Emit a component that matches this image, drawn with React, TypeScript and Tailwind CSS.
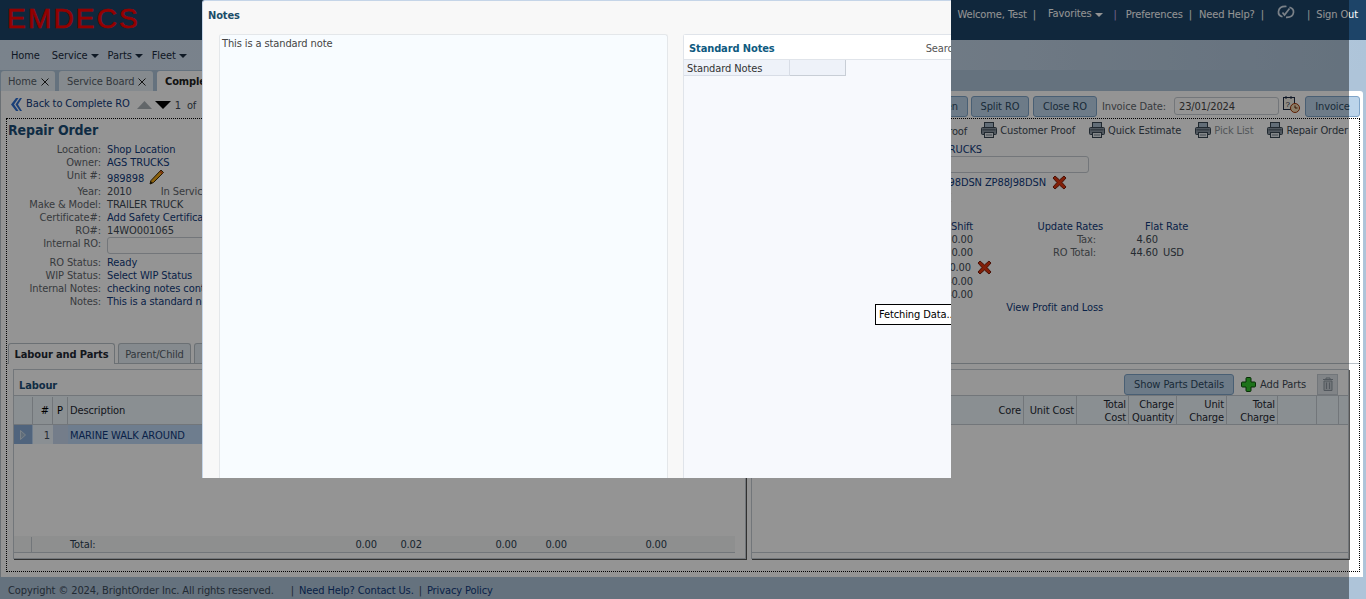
import React from "react";

const Caret = () => (
  <svg width="8" height="4" viewBox="0 0 8 4" className="ml-[3px] mt-[2px]"><path d="M0 0h8L4 4z" fill="currentColor" /></svg>
);

const Printer = () => (
  <svg width="16" height="16" viewBox="0 0 16 16" className="mr-[3px]">
    <rect x="3.500" y="0.500" width="9" height="5" fill="#a9bccd" stroke="#3a4854" />
    <rect x="0.500" y="5.500" width="15" height="7" rx="1" fill="#8b97a2" stroke="#3a4854" />
    <rect x="1.500" y="7" width="13" height="1.500" fill="#5c6975" />
    <rect x="3.500" y="10.500" width="9" height="5" fill="#e4e8ec" stroke="#3a4854" />
    <path d="M5 13h6" stroke="#77838d" />
  </svg>
);

const RedX = () => (
  <svg width="15" height="15" viewBox="0 0 15 15">
    <path d="M3 1 7.500 5 12 1l2 2-4 4.500 4 4.500-2 2-4.500-4L3 14l-2-2 4-4.500L1 3z" fill="#e0360f" stroke="#7a1c08" strokeWidth="1" />
  </svg>
);

const Pencil = () => (
  <svg width="15" height="16" viewBox="0 0 15 16">
    <path d="M12 1l2.500 2.500L4.500 13.500 1 15l1-3.500z" fill="#f0a818" stroke="#3d2a08" strokeWidth="1" />
    <path d="M1.500 12l2 2L1 15z" fill="#2a2208" />
    <path d="M11 2l2.500 2.500" stroke="#d04a20" strokeWidth="1.500" />
  </svg>
);

const Plus = () => (
  <svg width="15" height="15" viewBox="0 0 15 15">
    <path d="M6 .5h3a1 1 0 0 1 1 1V5h3.500a1 1 0 0 1 1 1v3a1 1 0 0 1-1 1H10v3.500a1 1 0 0 1-1 1H6a1 1 0 0 1-1-1V10H1.500a1 1 0 0 1-1-1V6a1 1 0 0 1 1-1H5V1.500a1 1 0 0 1 1-1z" fill="#35c42e" stroke="#0e4f0c" />
  </svg>
);

const Chevrons = () => (
  <svg width="12" height="15" viewBox="0 0 12 15">
    <path d="M6 1 1 7.500 6 14h2.500L4 7.500 8.500 1z" fill="#2f6fd0" />
    <path d="M10 1 5.500 7.500 10 14h2L8 7.500 12 1z" fill="#2f6fd0" />
  </svg>
);

const CalClock = () => (
  <svg width="17" height="17" viewBox="0 0 17 17">
    <rect x="0.500" y="1.500" width="11" height="12" fill="#f4f2e8" stroke="#1c2a44" />
    <path d="M3 0v3M8 0v3" stroke="#1c2a44" />
    <text x="2.500" y="11" fontSize="8" fontFamily="Liberation Sans" fill="#1c2a44">?</text>
    <circle cx="12" cy="12" r="4.500" fill="#f0d8b0" stroke="#a03408" />
    <path d="M12 9.500V12h2.500" stroke="#5a1c04" fill="none" />
  </svg>
);

const Trash = () => (
  <svg width="12" height="14" viewBox="0 0 12 14">
    <path d="M1 2.500h10M4 2.500V1h4v1.500" stroke="#8d97a0" fill="none" />
    <path d="M2 4h8v9.500H2z" fill="#c4ccd2" stroke="#8d97a0" />
    <path d="M4.500 5.500v6.500M7.500 5.500v6.500" stroke="#8d97a0" />
  </svg>
);

const Sync = () => (
  <svg width="18" height="14" viewBox="0 0 18 14" fill="none" stroke="#d3deea" strokeWidth="1.700">
    <path d="M5.500 11.800C2.800 11 1.200 9 1.500 6.500 1.900 3.200 5 1.200 9.500 1.500" />
    <path d="M12.500 2.200C15.200 3 16.800 5 16.500 7.500 16.100 10.800 13 12.500 9 12.300" />
    <path d="M5.500 7.500 7.500 10 12.500 3.500" />
  </svg>
);

const Close = () => (
  <svg width="8" height="8" viewBox="0 0 8 8" className="ml-[4px] mt-[2px]"><path d="M.5.5l7 7M7.500.5l-7 7" stroke="#222" /></svg>
);

const Row = ({ label, children, h = 13 }: { label: string; children: React.ReactNode; h?: number }) => (
  <div className="flex items-start" style={{ height: h }}>
    <div className="w-[93px] shrink-0 text-right text-[#5f666c]">{label}:</div>
    <div className="ml-[6px] flex items-center whitespace-nowrap text-[#103a7c]">{children}</div>
  </div>
);

const PrintItem = ({ label, dim }: { label: string; dim?: boolean }) => (
  <div className="flex items-center">
    <Printer />
    <span className={dim ? "text-[#8d9499]" : "text-[#3e4a55]"}>{label}</span>
  </div>
);

const Btn = ({ children, className = "" }: { children: React.ReactNode; className?: string }) => (
  <div className={"flex items-center rounded-[3px] border border-[#7fa4c8] bg-[#bcd4ea] text-[#2d4a63] " + className}>{children}</div>
);

const Th = ({ w, children, border = true }: { w: number; children?: React.ReactNode; border?: boolean }) => (
  <div style={{ width: w }} className={"flex shrink-0 items-center justify-end px-[2px] pt-[1px] text-right leading-[13px] text-[#1f2933] " + (border ? "border-r border-[#c4ccd2]" : "")}>
    <div>{children}</div>
  </div>
);

export default function App() {
  return (
    <div className="relative flex h-[599px] w-[1366px] flex-col overflow-hidden bg-[#aec4d9] font-['DejaVu_Sans',Verdana,sans-serif] text-[11px] leading-[13px] tracking-[-0.11px] [font-stretch:condensed]">
      {/* header */}
      <header className="flex h-[40px] shrink-0 justify-between bg-[#1d4468] text-white">
        <div className="ml-[7px] mt-[5px] whitespace-nowrap font-['Liberation_Sans',Arial,sans-serif] text-[28px] font-normal leading-[28px] tracking-[2.2px] text-[#ff0000] [-webkit-text-stroke:0.6px_#ff0000] [font-stretch:normal]">EMDECS</div>
        <div className="mr-[8px] flex pt-[8px] leading-[13px]">
          <span className="whitespace-nowrap">Welcome, Test</span>
          <span className="ml-[6px]">|</span>
          <span className="ml-[12px] -mt-[1px] flex items-center self-start">Favorites<Caret /></span>
          <span className="ml-[11px] text-[#c9a8e8]">|</span>
          <span className="ml-[9px]">Preferences</span>
          <span className="ml-[6px]">|</span>
          <span className="ml-[7px] whitespace-nowrap">Need Help?</span>
          <span className="ml-[6px]">|</span>
          <span className="ml-[13px] -mt-[3px]"><Sync /></span>
          <span className="ml-[12px]">|</span>
          <span className="ml-[6px] whitespace-nowrap">Sign Out</span>
        </div>
      </header>

      {/* nav */}
      <nav className="flex h-[30px] shrink-0 items-center bg-gradient-to-r from-[#d3e2f2] via-[#cddced] to-[#aec4d9] pl-[11px] text-[#1a2b40]">
        <span>Home</span>
        <span className="ml-[12px] flex items-center">Service<Caret /></span>
        <span className="ml-[9px] flex items-center">Parts<Caret /></span>
        <span className="ml-[9px] flex items-center">Fleet<Caret /></span>
      </nav>

      {/* page tabs */}
      <div className="flex h-[21px] shrink-0 items-end gap-[4px] whitespace-nowrap pl-[1px]">
        <div className="flex h-[20px] w-[54px] items-center rounded-t-[3px] bg-[#e6eef4] pl-[7px] text-[#56616a]">Home<Close /></div>
        <div className="flex h-[20px] w-[94px] items-center rounded-t-[3px] bg-[#e6eef4] pl-[8px] text-[#56616a]">Service Board<Close /></div>
        <div className="flex h-[20px] w-[120px] items-center rounded-t-[3px] bg-white pl-[8px] font-bold text-[#222]">Complete RO</div>
      </div>

      {/* main panel */}
      <main className="mr-[3px] flex h-[486px] shrink-0 flex-col rounded-tr-[3px] border-l border-[#b9c2c9] bg-white">
        <div className="flex h-[27px] shrink-0 items-center justify-between pr-[3px]">
          <div className="ml-[9px] flex items-center">
            <Chevrons />
            <span className="mb-[2px] ml-[4px] text-[#103a7c]">Back to Complete RO</span>
            <svg width="15" height="8" viewBox="0 0 15 8" className="ml-[7px]"><path d="M0 8 7.500 0 15 8z" fill="#aab0b6" /></svg>
            <svg width="16" height="8" viewBox="0 0 16 8" className="ml-[3px]"><path d="M0 0h16L8 8z" fill="#000" /></svg>
            <span className="ml-[4px] mt-[1px] text-[#3e4a55]">1&nbsp; of</span>
          </div>
          <div className="flex items-center pt-[3px]">
            <Btn className="h-[21px] w-[60px] justify-end pr-[9px]">Reopen</Btn>
            <Btn className="ml-[3px] h-[21px] w-[58px] justify-center">Split RO</Btn>
            <Btn className="ml-[4px] h-[21px] w-[64px] justify-center">Close RO</Btn>
            <span className="ml-[5px] text-[#5f666c]">Invoice Date:</span>
            <div className="ml-[8px] flex h-[18px] w-[105px] items-center rounded-[3px] border border-[#c6ccd2] pl-[4px] text-[#444]">23/01/2024</div>
            <span className="ml-[4px] -mt-[3px]"><CalClock /></span>
            <Btn className="ml-[5px] h-[21px] w-[55px] justify-center">Invoice</Btn>
          </div>
        </div>

        <div className="ml-[5px] mr-[3px] flex h-[454px] flex-col border border-dotted border-black">
          <div className="flex h-[224px] shrink-0 justify-between">
            <div className="w-[400px] pl-[1px]">
              <h1 className="mt-[3px] h-[21px] text-[14px] font-bold leading-[17px] text-[#1b4d75]">Repair Order</h1>
              <Row label="Location">Shop Location</Row>
              <Row label="Owner">AGS TRUCKS</Row>
              <Row label="Unit #" h={16}>
                <span className="mt-[2px]">989898</span>
                <span className="ml-[5px]"><Pencil /></span>
              </Row>
              <Row label="Year"><span className="text-[#3e4a55]">2010</span><span className="ml-[29px] text-[#5f666c]">In Service</span></Row>
              <Row label="Make &amp; Model"><span className="text-[#3e4a55]">TRAILER TRUCK</span></Row>
              <Row label="Certificate#">Add Safety Certificate</Row>
              <Row label="RO#"><span className="text-[#3e4a55]">14WO001065</span></Row>
              <Row label="Internal RO" h={19}><div className="h-[17px] w-[200px] rounded-[3px] border border-[#c6ccd2]" /></Row>
              <Row label="RO Status">Ready</Row>
              <Row label="WIP Status">Select WIP Status</Row>
              <Row label="Internal Notes">checking notes content</Row>
              <Row label="Notes">This is a standard note</Row>
            </div>

            <div className="flex w-[412px] flex-col whitespace-nowrap">
              <div className="flex h-[19px] items-end justify-end gap-[14px] pr-[11px] text-[#3e4a55]">
                <span className="flex items-center">Proof</span>
                <PrintItem label="Customer Proof" />
                <PrintItem label="Quick Estimate" />
                <PrintItem label="Pick List" dim />
                <PrintItem label="Repair Order" />
              </div>
              <div className="mt-[5px] flex h-[13px] w-[35px] justify-end text-[#103a7c]">AGS TRUCKS</div>
              <div className="ml-[-10px] mt-[0px] h-[17px] w-[152px] rounded-[3px] border border-[#c6ccd2]" />
              <div className="mt-[2px] flex h-[15px] items-center">
                <div className="flex w-[99px] justify-end text-[#103a7c]">ZP88J98DSN ZP88J98DSN</div>
                <span className="ml-[6px]"><RedX /></span>
              </div>
              <div className="mt-[0px] ml-[-10px] h-[15px]"><RedX /></div>
              <div className="mt-[15px] flex h-[13px]">
                <div className="w-[26px] text-right text-[#103a7c]">Shift</div>
                <div className="w-[130px] text-right text-[#103a7c]">Update Rates</div>
                <div className="ml-[42px] text-[#103a7c]">Flat Rate</div>
              </div>
              <div className="flex h-[13px] text-[#3e4a55]">
                <div className="w-[26px] text-right">0.00</div>
                <div className="w-[123px] text-right text-[#5f666c]">Tax:</div>
                <div className="w-[62px] text-right">4.60</div>
              </div>
              <div className="flex h-[13px] text-[#3e4a55]">
                <div className="w-[26px] text-right">0.00</div>
                <div className="w-[123px] text-right text-[#5f666c]">RO Total:</div>
                <div className="w-[62px] text-right">44.60</div>
                <div className="ml-[5px]">USD</div>
              </div>
              <div className="mt-[1px] flex h-[15px] items-center text-[#3e4a55]">
                <div className="w-[24px] text-right">0.00</div>
                <span className="ml-[6px]"><RedX /></span>
              </div>
              <div className="h-[13px] w-[26px] text-right text-[#3e4a55]">-0.00</div>
              <div className="h-[13px] w-[26px] text-right text-[#3e4a55]">-0.00</div>
              <div className="h-[13px] w-[156px] text-right text-[#103a7c]">View Profit and Loss</div>
            </div>
          </div>

          {/* sub tabs */}
          <div className="flex h-[21px] shrink-0 items-end gap-[3px] whitespace-nowrap border-b border-[#b9c2c9] pl-[1px]">
            <div className="flex h-[21px] w-[107px] translate-y-[1px] items-center justify-center rounded-t-[3px] border border-b-0 border-[#b9c2c9] bg-white font-bold text-[#1f2933]">Labour and Parts</div>
            <div className="flex h-[20px] w-[73px] items-center justify-center rounded-t-[3px] border border-b-0 border-[#b9c2c9] bg-[#e6eef4] pt-[1px] text-[#56616a]">Parent/Child</div>
            <div className="flex h-[20px] w-[60px] items-center justify-center rounded-t-[3px] border border-b-0 border-[#b9c2c9] bg-[#e6eef4] pt-[1px] text-[#56616a]">History</div>
          </div>

          {/* panels */}
          <div className="mt-[5px] flex gap-[5px] pl-[6px]">
            <section className="flex h-[190px] w-[733px] flex-col border border-[#c4ccd2] shadow-[1px_1px_0_#555]">
              <div className="flex h-[25px] shrink-0 items-center pl-[5px] pt-[5px] text-[#1b4d75]"><b>Labour</b></div>
              <div className="flex h-[30px] shrink-0 items-stretch border-y border-[#c4ccd2] bg-[#eef6fb] pt-[1px]">
                <div className="w-[19px] border-r border-[#c4ccd2]" />
                <div className="flex w-[20px] items-center justify-end border-r border-[#c4ccd2] pr-[3px]">#</div>
                <div className="flex w-[15px] items-center justify-center border-r border-[#c4ccd2]">P</div>
                <div className="flex items-center pl-[2px] text-[#1f2933]">Description</div>
              </div>
              <div className="flex h-[19px] shrink-0 items-stretch bg-[#bdd7f5]">
                <div className="flex w-[18px] items-center justify-center bg-[#8aadd8]">
                  <svg width="6" height="10" viewBox="0 0 6 10"><path d="M.5.5 5.500 5 .5 9.500z" fill="#a5bcd3" stroke="#d3e0ec" /></svg>
                </div>
                <div className="ml-[1px] flex w-[20px] items-center justify-end bg-[#eef6fd] pr-[3px] pt-[1px] text-[#3e4a55]">1</div>
                <div className="w-[15px] bg-[#c8d7ee]" />
                <div className="flex items-center pl-[2px] pt-[1px] text-[#103a7c]">MARINE WALK AROUND</div>
              </div>
              <div className="flex-1" />
              <div className="mr-[10px] flex h-[17px] shrink-0 items-center border-b border-[#c4ccd2] bg-[#f5f6f7] pt-[1px] text-[#2c3f52]">
                <div className="h-full w-[18px] border-r border-[#c4ccd2]" />
                <div className="ml-[38px] w-[282px]">Total:</div>
                <div className="flex">
                  <div className="w-[25px] text-right">0.00</div>
                  <div className="w-[45px] text-right">0.02</div>
                  <div className="w-[95px] text-right">0.00</div>
                  <div className="w-[50px] text-right">0.00</div>
                  <div className="w-[100px] text-right">0.00</div>
                </div>
              </div>
              <div className="h-[5px]" />
            </section>

            <section className="flex h-[190px] w-[598px] flex-col border border-[#c4ccd2] shadow-[1px_1px_0_#555]">
              <div className="flex h-[25px] shrink-0 items-center justify-end pr-[10px] pt-[3px]">
                <Btn className="h-[21px] w-[110px] justify-center">Show Parts Details</Btn>
                <span className="ml-[7px]"><Plus /></span>
                <span className="ml-[4px] text-[#3e4a55]">Add Parts</span>
                <div className="ml-[11px] flex h-[21px] w-[21px] items-center justify-center border border-[#c4ccd2] bg-[#dfe4e8]"><Trash /></div>
              </div>
              <div className="flex h-[30px] shrink-0 items-stretch justify-end whitespace-nowrap border-b border-t border-[#c4ccd2] bg-[#eef6fb] pr-[9px]">
                <Th w={30}>Core</Th>
                <Th w={53}>Unit Cost</Th>
                <Th w={52}>Total<br />Cost</Th>
                <Th w={48}>Charge<br />Quantity</Th>
                <Th w={50}>Unit<br />Charge</Th>
                <Th w={51}>Total<br />Charge</Th>
                <Th w={39} />
                <Th w={22} />
              </div>
              <div className="flex-1" />
              <div className="mb-[5px] border-b border-[#c4ccd2]" />
            </section>
          </div>
        </div>
      </main>

      {/* footer */}
      <footer className="flex h-[22px] shrink-0 items-center whitespace-nowrap pl-[8px] pt-[4px] text-[#3a4a5a]">
        <span>Copyright © 2024, BrightOrder Inc. All rights reserved.</span>
        <span className="ml-[17px]">|</span>
        <span className="ml-[5px] text-[#103a7c]">Need Help? Contact Us.</span>
        <span className="ml-[5px]">|</span>
        <span className="ml-[5px] text-[#103a7c]">Privacy Policy</span>
      </footer>

      {/* dim overlay */}
      <div className="absolute left-0 top-0 h-[599px] w-[1349px] bg-black/[0.42]" />

      {/* modal */}
      <div className="absolute left-[202px] top-0 flex h-[478px] w-[749px] flex-col overflow-hidden rounded-tl-[3px] border-l border-t border-[#c5d5e8] bg-[#f8f8f8]">
        <div className="flex h-[33px] shrink-0 items-center pl-[5px] pb-[4px] font-bold text-[#1b4d68]">Notes</div>
        <div className="flex flex-1 pl-[16px]">
          <div className="w-[449px] shrink-0 rounded-t-[3px] border border-b-0 border-[#e4e7ea] bg-[#f8fcff] pl-[2px] pt-[2px] text-[#444]">This is a standard note</div>
          <div className="ml-[15px] flex w-[270px] shrink-0 flex-col rounded-tl-[3px] border-l border-t border-[#e0e4ea] bg-[#f7f9fd]">
            <div className="flex h-[25px] shrink-0 items-center justify-between whitespace-nowrap border-b border-[#e0e4ea] bg-white pl-[5px] pt-[2px]">
              <b className="text-[#0e5a80]">Standard Notes</b>
              <span className="mr-[-6px] text-[#555]">Search</span>
            </div>
            <div className="flex h-[16px] shrink-0">
              <div className="flex w-[106px] items-center border-b border-r border-[#d8dde6] bg-[#eef2f9] pl-[3px] pt-[1px] text-[#333]">Standard Notes</div>
              <div className="w-[56px] border-b border-r border-[#c8ced6] bg-[#eef2f9]" />
            </div>
          </div>
        </div>
        <div className="absolute left-[672px] top-[303px] flex h-[21px] w-[90px] items-center whitespace-nowrap border border-black bg-white pl-[3px] text-black">Fetching Data...</div>
      </div>
    </div>
  );
}
